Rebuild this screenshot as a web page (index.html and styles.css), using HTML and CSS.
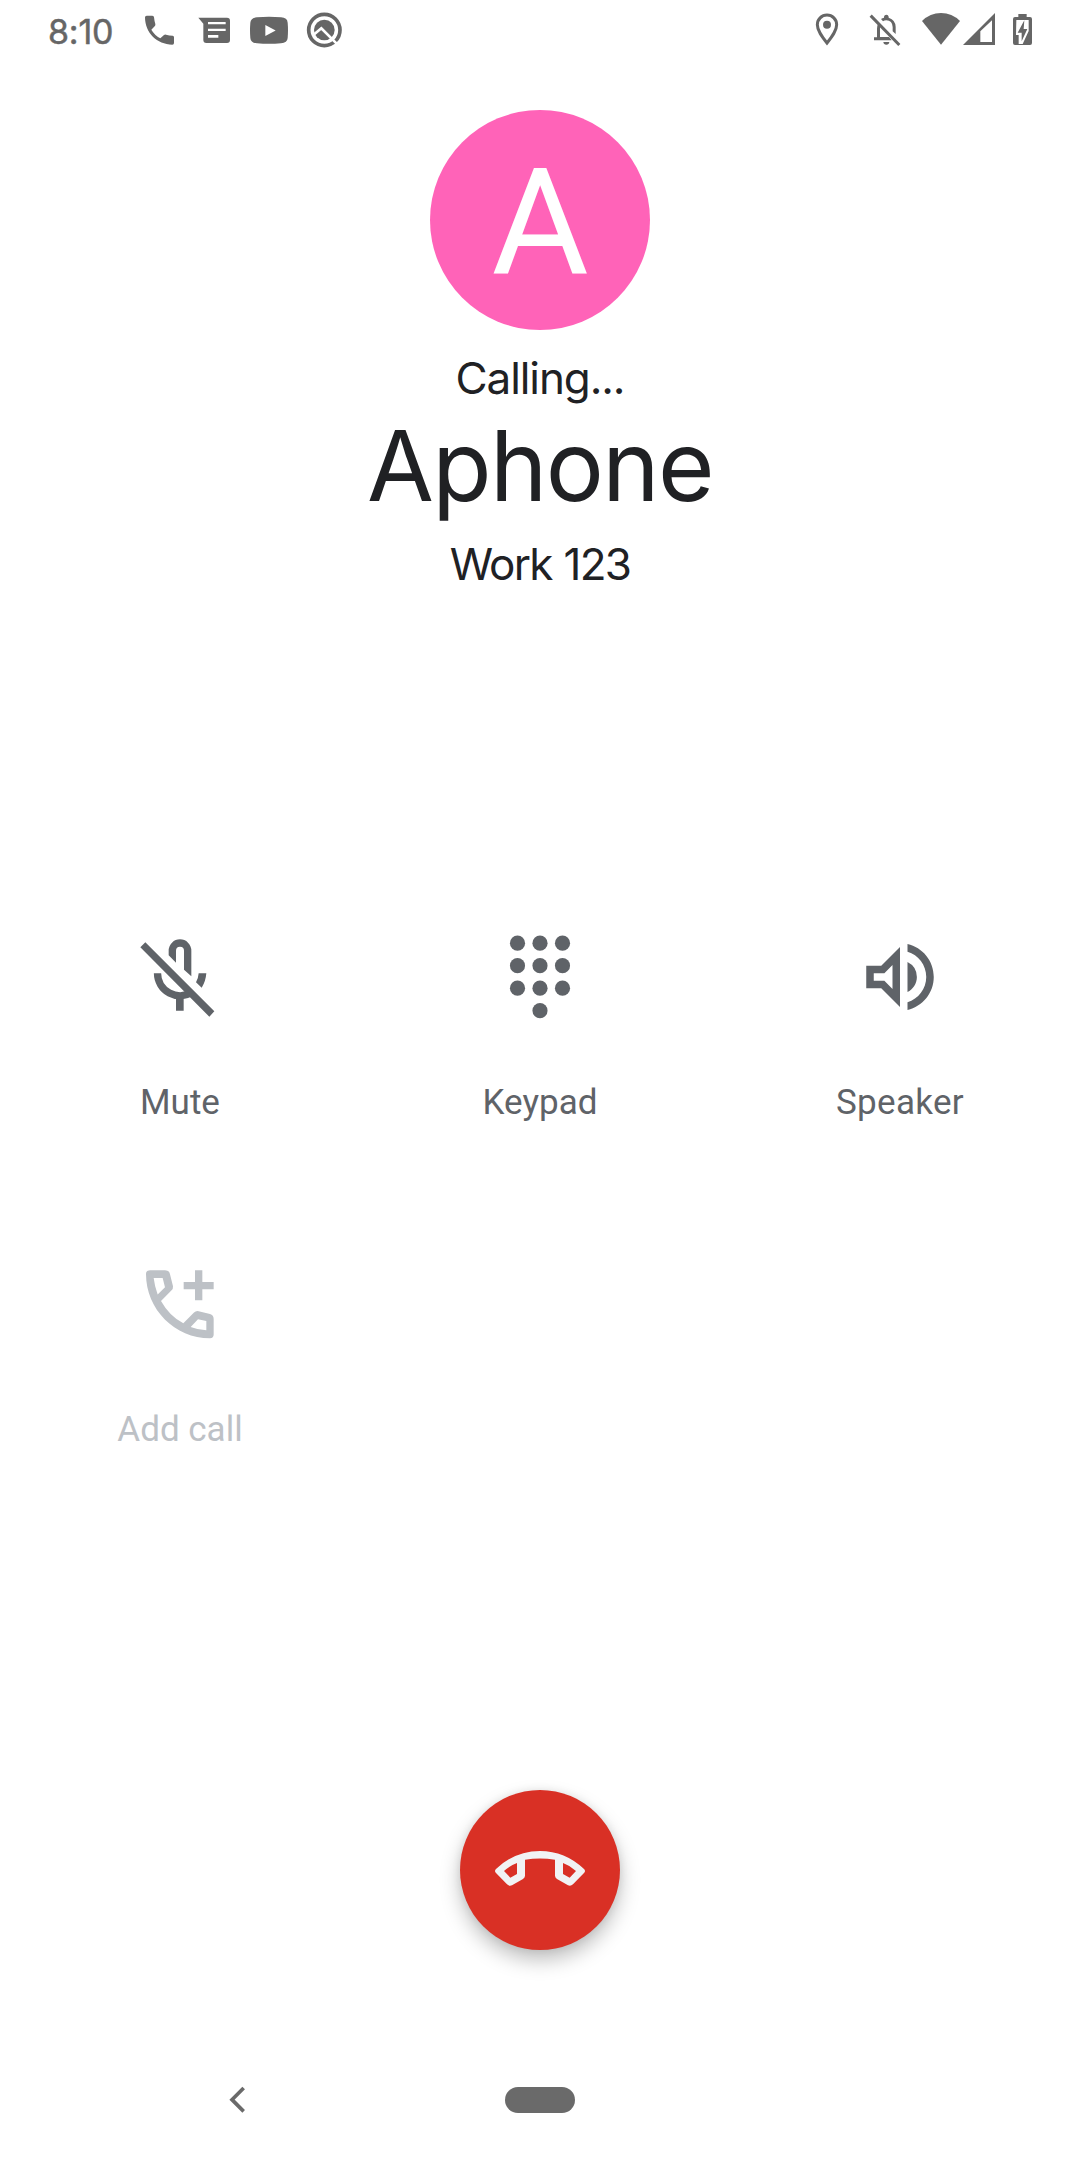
FILE: index.html
```html
<!DOCTYPE html>
<html lang="en">
<head>
<meta charset="utf-8">
<title>Calling Aphone</title>
<link rel="stylesheet" href="styles.css">
</head>
<body>
<div class="screen">
  <header class="status">
    <div class="status-left">
      <span class="time">8:10</span>
      <svg class="ic-phone" width="31" height="40" viewBox="342 30 93 120"><path d="M350 47H367Q372 47 372 52Q373 62 376 72Q377 76 374 79L364 89Q374 106 391 115L402 105Q405 103 408 104Q418 107 428 107Q432 108 432 112V129Q432 134 427 134C381 134 345 98 345 52Q345 47 350 47Z"/></svg>
      <svg class="ic-message" width="33" height="40" viewBox="504 30 99 120"><path fill-rule="evenodd" d="M505 53H591Q600 53 600 62V120Q600 129 591 129H529Q520 129 520 120V71ZM534 66V73H587V66ZM534 86V93H587V86ZM534 105V113H565V105Z"/></svg>
      <svg class="ic-video" width="40" height="40" viewBox="657 30 120 120"><path fill-rule="evenodd" d="M681 52Q717 49 753 52Q772 53 773 68Q775 91 773 114Q772 129 753 130Q717 133 681 130Q662 129 661 114Q659 91 661 68Q662 53 681 52ZM706 75V108L737 91.500Z"/></svg>
      <svg class="ic-q" width="37" height="40" viewBox="828 30 111 120"><circle cx="883" cy="90" r="47" fill="none" stroke="#666" stroke-width="11"/><circle cx="883" cy="90" r="31"/><path d="M850 105L874 85L926 137" fill="none" stroke="#fff" stroke-width="8"/></svg>
    </div>
    <div class="status-right">
      <svg width="26" height="40" viewBox="72 30 78 120"><path fill="none" stroke="#666" stroke-width="9" d="M111 129C96 110 82 92 82 74A29 29 0 0 1 140 74C140 92 126 110 111 129Z"/><circle cx="111" cy="74" r="12"/></svg>
      <svg class="ic-bell" width="32" height="40" viewBox="237 30 96 120"><path d="M282 53V50Q283 44 289 44Q295 44 296 50V53Q317 60 317 81V102L308 94V81Q307 62 289 61Q283 61 279 64L273 57Q277 54 282 53ZM264 71L271 79Q270 82 270 85V111H297L305 121H252V112H261V86Q261 78 264 71ZM280 126H298Q297 134 289 134Q281 134 280 126Z"/><path d="M242 47L328 135" fill="none" stroke="#666" stroke-width="9"/></svg>
      <svg class="ic-wifi" width="40" height="40" viewBox="393 30 120 120"><path d="M396 63Q420 39 453 39Q486 39 510 63L453 134Z"/></svg>
      <svg class="ic-signal" width="34" height="40" viewBox="516 30 102 120"><path fill-rule="evenodd" d="M519 135L615 39V135ZM571 94V126H606V61Z"/></svg>
      <svg class="ic-battery" width="21" height="40" viewBox="666 30 63 120"><path d="M685 42H710V51H720Q726 51 726 57V129Q726 135 720 135H675Q669 135 669 129V57Q669 51 675 51H685Z"/><path d="M679 60H716V93L698 132H686V105H678Z" fill="#fff"/><path d="M703 61L683 98H695V124L712 87H701Z"/></svg>
    </div>
  </header>

  <section class="caller">
    <div class="avatar">A</div>
    <p class="state">Calling...</p>
    <h1 class="name">Aphone</h1>
    <p class="number">Work 123</p>
  </section>

  <main class="controls">
    <button class="control">
      <svg width="90" height="90" viewBox="75 36 270 270"><path d="M106 67L313 274L298 290L91 82ZM176 106V92A34 34 0 0 1 244 92V169L222 149V92A12 12 0 0 0 198 92V128ZM198 234H221V272H198ZM266 160H289Q287 185 275 203L258 187Q265 175 266 160Z"/><path d="M142.500 160A67.500 67.500 0 0 0 247 216" fill="none" stroke="#5f6368" stroke-width="22"/></svg>
      <span class="label">Mute</span>
    </button>
    <button class="control">
      <svg width="90" height="90" viewBox="75 36 270 270"><circle cx="142.500" cy="69.500" r="22.700"/><circle cx="210" cy="69.500" r="22.700"/><circle cx="277.500" cy="69.500" r="22.700"/><circle cx="142.500" cy="137" r="22.700"/><circle cx="210" cy="137" r="22.700"/><circle cx="277.500" cy="137" r="22.700"/><circle cx="142.500" cy="204.500" r="22.700"/><circle cx="210" cy="204.500" r="22.700"/><circle cx="277.500" cy="204.500" r="22.700"/><circle cx="210" cy="272" r="22.700"/></svg>
      <span class="label">Keypad</span>
    </button>
    <button class="control">
      <svg width="90" height="90" viewBox="0 0 24 24"><path fill-rule="evenodd" d="M3 9v6h4l5 5V4L7 9H3zm7-.17v6.340L7.830 13H5v-2h2.830L10 8.830zM16.500 12A4.500 4.500 0 0 0 14 7.970v8.050c1.480-.73 2.500-2.250 2.500-4.020zM14 3.230v2.060c2.890.86 5 3.540 5 6.710s-2.110 5.850-5 6.710v2.060c4.010-.91 7-4.490 7-8.770 0-4.280-2.990-7.860-7-8.770z"/></svg>
      <span class="label wide">Speaker</span>
    </button>
    <button class="control disabled">
      <svg width="90" height="90" viewBox="105 26.250 270 270"><path fill-rule="evenodd" d="M150 60H195Q208 60 210 72L219 108Q220 116 214 121L183 152Q208 197 250 219L282 187Q288 181 296 183L330 191Q341 194 341 206V253Q341 264 330 264C225 264 138 177 138 71Q138 60 150 60ZM161 83H188L195 111L173 133Q164 108 161 83ZM272 230L294 207L319 212V240Q295 239 272 230ZM285 60H307V95H341V117H307V150H285V117H251V95H285Z"/></svg>
      <span class="label">Add call</span>
    </button>
  </main>

  <div class="hangup-row">
    <button class="hangup" aria-label="End call">
      <svg width="90" height="90" viewBox="165 165 270 270"><path fill-rule="evenodd" d="M168 297Q225 243 300 243Q375 243 432 297Q438 303 432 309L399 343Q392 350 384 346L351 327Q345 323 345 317V269Q300 262 255 269V317Q255 323 249 327L216 346Q208 350 201 343L168 309Q162 303 168 297ZM192 303Q211 286 231 279V312L211 323ZM408 303Q389 286 369 279V312L389 323Z"/></svg>
    </button>
  </div>

  <nav class="navbar">
    <svg class="back" width="17" height="27" viewBox="87 79 51 81"><path d="M131 85L96 120L131 155" fill="none" stroke="#6a6a6a" stroke-width="11"/></svg>
    <span class="home"></span>
  </nav>
</div>
</body>
</html>
```
FILE: styles.css
```css
* { box-sizing: border-box; }
body { margin: 0; background: #fff; }
.screen {
  display: flex;
  flex-direction: column;
  width: 1080px;
  height: 2160px;
  background: #fff;
  color: #202124;
  font-family: Inter, "Liberation Sans", sans-serif;
}
svg { display: block; flex: none; }
.status {
  display: flex;
  justify-content: space-between;
  height: 60px;
  padding: 10px 47px 0 48px;
  fill: #666;
  color: #666;
}
.status-left, .status-right { display: flex; height: 40px; }
.time {
  width: 96px;
  font-size: 34px;
  line-height: 43px;
  letter-spacing: -0.2px;
  -webkit-text-stroke: 0.5px #666;
}
.ic-message { margin-left: 23px; }
.ic-video { margin-left: 18px; }
.ic-q { margin-left: 17px; }
.ic-bell { margin-left: 29px; }
.ic-wifi { margin-left: 20px; }
.ic-signal { margin-left: 1px; }
.ic-battery { margin-left: 16px; }

.caller {
  display: flex;
  flex-direction: column;
  align-items: center;
  height: 872px;
  padding-top: 50px;
}
.avatar {
  width: 220px;
  height: 220px;
  padding-top: 5px;
  border-radius: 50%;
  background: #ff63b8;
  color: #fff;
  font: 149px/217px Roboto, sans-serif;
  text-align: center;
}
.state, .name, .number { margin: 0; font-weight: 400; white-space: nowrap; }
.state { margin-top: 18px; font-size: 44px; line-height: 60px; letter-spacing: -1.1px; }
.name { font-size: 97px; line-height: 116px; letter-spacing: -1.6px; }
.number { font-size: 44px; line-height: 60px; margin-top: 10px; letter-spacing: -1.7px; word-spacing: 1px; }

.controls {
  display: grid;
  grid-template-columns: repeat(3, 360px);
  grid-auto-rows: 327px;
  height: 858px;
}
button { border: 0; padding: 0; background: none; }
.control {
  display: flex;
  flex-direction: column;
  align-items: center;
  gap: 61px;
  color: #5f6368;
  fill: #5f6368;
  font: 35px/40px Roboto, sans-serif;
}
.wide { letter-spacing: 0.3px; }
.disabled { color: #bdc1c6; fill: #bdc1c6; }

.hangup-row { display: flex; justify-content: center; height: 297px; }
.hangup {
  display: flex;
  align-items: center;
  justify-content: center;
  width: 160px;
  height: 160px;
  border-radius: 50%;
  background: #d93025;
  fill: #f1f3f4;
  box-shadow: 0 10px 20px rgba(0, 0, 0, 0.25), 0 0 8px rgba(0, 0, 0, 0.08);
}
.navbar { display: flex; padding-left: 229px; height: 73px; }
.back { margin-top: -1px; }
.home {
  width: 70px;
  height: 26px;
  margin-left: 259px;
  border-radius: 13px;
  background: #6a6a6a;
}
```
